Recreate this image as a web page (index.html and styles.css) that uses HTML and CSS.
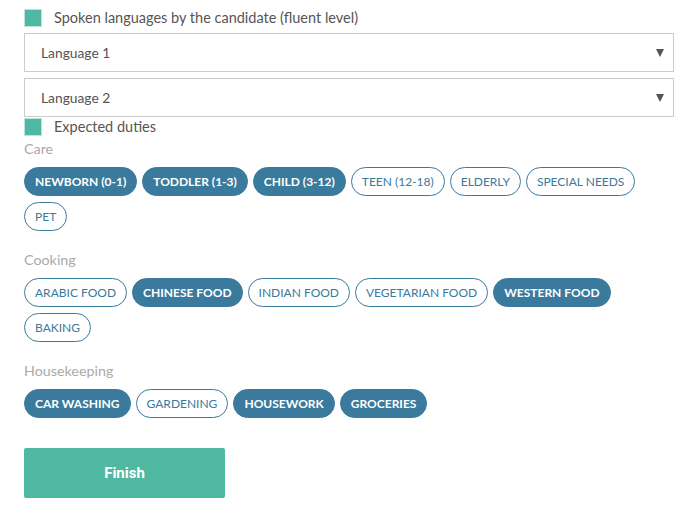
FILE: index.html
```html
<!DOCTYPE html>
<html>
<head>
<meta charset="utf-8">
<link rel="stylesheet" href="styles.css">
</head>
<body>
<div class="form">
  <div class="check">
    <span class="box"></span>
    <span class="check-label">Spoken languages by the candidate (fluent level)</span>
  </div>
  <div class="select first">
    <span class="select-text">Language 1</span>
    <span class="arrow"></span>
  </div>
  <div class="select">
    <span class="select-text">Language 2</span>
    <span class="arrow"></span>
  </div>
  <div class="check check-tight">
    <span class="box"></span>
    <span class="check-label">Expected duties</span>
  </div>

  <div class="section first-section">
    <div class="section-label">Care</div>
    <div class="chips">
      <span class="chip on">NEWBORN (0-1)</span>
      <span class="chip on">TODDLER (1-3)</span>
      <span class="chip on">CHILD (3-12)</span>
      <span class="chip">TEEN (12-18)</span>
      <span class="chip">ELDERLY</span>
      <span class="chip">SPECIAL NEEDS</span>
      <span class="chip">PET</span>
    </div>
  </div>

  <div class="section">
    <div class="section-label">Cooking</div>
    <div class="chips">
      <span class="chip">ARABIC FOOD</span>
      <span class="chip on">CHINESE FOOD</span>
      <span class="chip">INDIAN FOOD</span>
      <span class="chip">VEGETARIAN FOOD</span>
      <span class="chip on">WESTERN FOOD</span>
      <span class="chip">BAKING</span>
    </div>
  </div>

  <div class="section">
    <div class="section-label">Housekeeping</div>
    <div class="chips">
      <span class="chip on">CAR WASHING</span>
      <span class="chip">GARDENING</span>
      <span class="chip on">HOUSEWORK</span>
      <span class="chip on">GROCERIES</span>
    </div>
  </div>

  <button class="finish">Finish</button>
</div>
</body>
</html>
```

FILE: styles.css
```css
* { box-sizing: border-box; }

body {
  margin: 0;
  background: #ffffff;
  font-family: "Lato", "Noto Sans", sans-serif;
  color: #555555;
}

.form {
  width: 674px;
  padding: 9px 0 0 24px;
  display: flex;
  flex-direction: column;
}

.check {
  display: flex;
  align-items: center;
  height: 18px;
  gap: 12px;
}

.box {
  width: 18px;
  height: 18px;
  background: #4fb8a0;
  border: 1px solid #bfe3da;
  flex: none;
}

.check-label {
  font-size: 14.5px;
  color: #555555;
  line-height: 18px;
}

.select {
  height: 39px;
  border: 1px solid #cccccc;
  display: flex;
  align-items: center;
  justify-content: space-between;
  padding: 0 9px 0 16px;
  margin-top: 6px;
}

.select-text {
  font-size: 13.8px;
  color: #555555;
}

.arrow {
  width: 0;
  height: 0;
  border-left: 4px solid transparent;
  border-right: 4px solid transparent;
  border-top: 8px solid #555555;
}

.check-tight {
  margin-top: 1px;
}

.section {
  margin-top: 19px;
  display: flex;
  flex-direction: column;
}

.first-section {
  margin-top: 3px;
}

.section-label {
  font-size: 14.3px;
  color: #aaaaaa;
  line-height: 20px;
  margin-bottom: 8px;
}

.chips {
  display: flex;
  flex-wrap: wrap;
  gap: 6px 5px;
}

.chip {
  height: 29px;
  line-height: 27px;
  border: 1px solid #3a7a9c;
  border-radius: 15px;
  padding: 0 10px;
  font-size: 12px;
  color: #3a7a9c;
  background: #ffffff;
  white-space: nowrap;
}

.chip.on {
  background: #3a7a9c;
  color: #ffffff;
  font-weight: 700;
}

.finish {
  margin-top: 30px;
  width: 201px;
  height: 50px;
  border: none;
  border-radius: 2px;
  background: #4fb8a0;
  color: #ffffff;
  font-family: "Roboto", sans-serif;
  font-weight: 700;
  font-size: 15px;
  padding: 0;
}
```
